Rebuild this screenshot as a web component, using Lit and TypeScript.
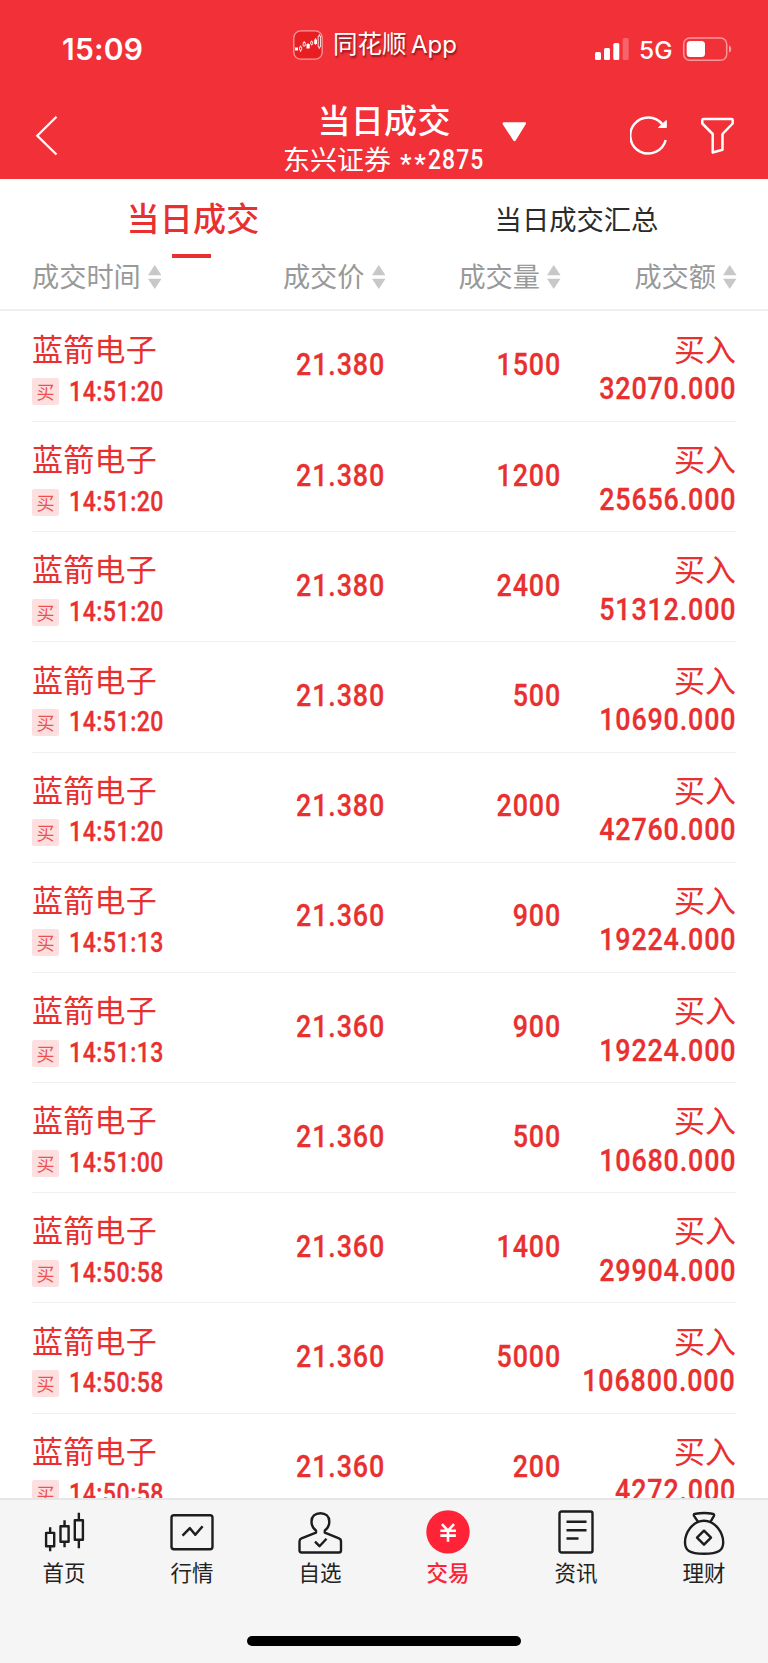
import { LitElement, html, css, svg } from "lit";
import { customElement, property } from "lit/decorators.js";

interface Trade {
  time: string;
  price: string;
  volume: string;
  amount: string;
}

const NAME = "蓝箭电子";
const TRADES: Trade[] = [
  { time: "14:51:20", price: "21.380", volume: "1500", amount: "32070.000" },
  { time: "14:51:20", price: "21.380", volume: "1200", amount: "25656.000" },
  { time: "14:51:20", price: "21.380", volume: "2400", amount: "51312.000" },
  { time: "14:51:20", price: "21.380", volume: "500", amount: "10690.000" },
  { time: "14:51:20", price: "21.380", volume: "2000", amount: "42760.000" },
  { time: "14:51:13", price: "21.360", volume: "900", amount: "19224.000" },
  { time: "14:51:13", price: "21.360", volume: "900", amount: "19224.000" },
  { time: "14:51:00", price: "21.360", volume: "500", amount: "10680.000" },
  { time: "14:50:58", price: "21.360", volume: "1400", amount: "29904.000" },
  { time: "14:50:58", price: "21.360", volume: "5000", amount: "106800.000" },
  { time: "14:50:58", price: "21.360", volume: "200", amount: "4272.000" },
];

const ICONS = {
  home: svg`<path d="M3.600 22.700h8.100V36H3.600zM7.650 17v5.700M7.650 36v5"/>
    <path d="M18 16h8.100v15.500H18zM22.050 10v6M22.050 31.500V37"/>
    <path d="M32.300 10h8.100v19.500h-8.100zM36.350 2.500V10M36.350 29.500V38"/>`,
  market: svg`<rect x="1" y="5" width="41" height="34" rx="2.500"/><path d="M12 25.500 19.400 18l5.400 6.500 7.300-8.500" stroke-width="2.500"/>`,
  watch: svg`<path d="M17.500 22.500v-2.300c-3-2-4.500-5-4.500-9 0-5 3.500-8.200 8.900-8.200s8.900 3.200 8.900 8.200c0 4-1.500 7-4.500 9v2.300l14.200 5.700c1.600.6 2 1.400 2 3V40c0 1.600-.7 2.300-2 2.300H3C1.700 42.300 1 41.600 1 40v-8.800c0-1.600.5-2.400 2-3z"/><path d="m16.500 31.500 4.500 4.500 7-7.500" />`,
  trade: svg`<circle class="disc" cx="21.500" cy="21.700" r="21.700"/><path class="yen" d="m15.500 14 6 6.500 6-6.500M13.800 20.500h15.600M13.800 25.400h15.600M21.500 20.500v11"/>`,
  news: svg`<rect x="5" y="1.300" width="33" height="41" rx="2"/><path d="M12 11.500h20M12 20h20M12 28.300h12" stroke-width="2.600"/>`,
  wealth: svg`<path d="m15.500 11.500-4-5.800c-.7-1.300.2-2 1.500-2.100 6-1 11.500-1 17 0 1.500.2 2 1 1.300 2.300l-3.200 5.600"/><path d="M21.500 10.500C10 10.500 2.500 23 2.500 32c0 8 4 11.500 19 11.500S40.700 40 40.700 32c0-9-7.700-21.500-19.200-21.500z"/><path d="m21.500 20.500 7 7-7 7-7-7z"/>`,
};

const TABS: { label: string; icon: unknown; active?: boolean }[] = [
  { label: "首页", icon: ICONS.home },
  { label: "行情", icon: ICONS.market },
  { label: "自选", icon: ICONS.watch },
  { label: "交易", icon: ICONS.trade, active: true },
  { label: "资讯", icon: ICONS.news },
  { label: "理财", icon: ICONS.wealth },
];

@customElement("trade-row")
class TradeRow extends LitElement {
  @property({ attribute: false }) trade!: Trade;

  static styles = css`
    :host {
      display: grid;
      grid-template-columns: 176px 177px 174.500px minmax(0, 1fr);
      margin: 0 32px;
      height: 110.200px;
      box-sizing: border-box;
      border-bottom: 1px solid #efefef;
      color: #e93030;
    }
    .name, .side { font-size: 31px; line-height: 36px; white-space: nowrap; margin-top: 18.200px; }
    .name { letter-spacing: .250px; }
    .side { text-align: right; }
    .when { display: flex; align-items: center; margin-top: 12.500px; height: 27px; }
    .tag {
      width: 27px; height: 27px; border-radius: 2px; background: #fedfe0;
      font-size: 18px; line-height: 26px; text-align: center; color: #ec5050;
    }
    .num {
      font-family: Roboto, "Liberation Sans", sans-serif;
      font-weight: 500; font-size: 32px; line-height: 36px; white-space: nowrap;
      letter-spacing: 1px; transform: scaleX(0.84); transform-origin: right;
      display: block; text-align: right; -webkit-text-stroke: .300px currentColor;
    }
    .mid { margin-top: 34.700px; }
    .vol { margin-right: -1.500px; }
    .last { display: flex; flex-direction: column; align-items: flex-end; }
    .amount { margin-top: 4.500px; }
    .time { font-size: 27.500px; line-height: 27px; transform-origin: left; margin: -1.500px 0 0 10px; letter-spacing: .600px; }
  `;

  render() {
    const t = this.trade;
    return html`
      <div>
        <div class="name">${NAME}</div>
        <div class="when"><span class="tag">买</span><span class="num time">${t.time}</span></div>
      </div>
      <span class="num mid">${t.price}</span>
      <span class="num mid vol">${t.volume}</span>
      <div class="last">
        <div class="side">买入</div>
        <span class="num amount">${t.amount}</span>
      </div>
    `;
  }
}

@customElement("app-root")
class AppRoot extends LitElement {
  static styles = css`
    :host {
      display: flex; flex-direction: column; width: 768px; height: 1663px; overflow: hidden;
      background: #fff; font-family: "Noto Sans CJK SC", sans-serif;
    }
    svg { display: block; fill: none; }
    .head { height: 179.300px; flex: none; background: #f23038; color: #fff; }
    .status { display: flex; height: 96px; box-sizing: border-box; align-items: flex-start; }
    .clock { font: 600 30px/36px Inter, sans-serif; width: 231px; margin: 31px 0 0 62px; letter-spacing: .200px; }
    .applogo { margin: 29.500px 10px 0 0; }
    .appname { font-size: 24.500px; line-height: 30px; margin-top: 28.200px; width: 262px; text-shadow: 1px 2px 2px rgba(60,0,0,.6); white-space: nowrap; }
    .latin { font-family: Inter, sans-serif; font-size: 24px; margin-left: 4.500px; }
    .signal { margin-top: 37px; }
    .net { font: 500 24.500px/30px Inter, sans-serif; margin: 34.700px 0 0 9px; width: 42.800px; white-space: nowrap; }
    .battery { margin-top: 36.700px; }
    .nav { display: flex; height: 83px; align-items: flex-start; }
    .back { margin: 20px 0 0 35px; width: 248px; }
    .title { width: 204px; white-space: nowrap; }
    .big { font-size: 33px; line-height: 38px; font-weight: 500; letter-spacing: .300px; margin: 4px 0 0 34.500px; }
    .account { font-size: 27px; line-height: 32px; font-weight: 400; margin-top: 5px; display: flex; }
    .stars { font: 500 26px/32px Roboto, sans-serif; letter-spacing: 2.700px; width: 27.500px; margin: 5px 0 0 9px; }
    .digits { font-family: Roboto, sans-serif; font-weight: 500; font-size: 27px; letter-spacing: 1.200px; transform: scaleX(.85); transform-origin: left; margin-top: .700px; }
    .caret { margin: 26px 0 0 14.500px; }
    .refresh { margin: 20px 0 0 103px; }
    .filter { margin: 21px 0 0 33px; }
    .tabs { display: grid; grid-template-columns: 1fr 1fr; height: 79px; flex: none; }
    .tab { display: flex; flex-direction: column; align-items: center; color: #2b2b2b; font-size: 27.300px; line-height: 32px; padding-top: 23px; }
    .tab:last-child { padding-left: 1px; }
    .tab.on { color: #e93030; font-size: 33px; line-height: 38px; font-weight: 500; padding-top: 19px; letter-spacing: .300px; }
    .tab.on span:first-child { padding-left: 2px; }
    .bar { width: 39.500px; height: 4px; background: #e93030; margin: 18px 1px 0 0; }
    .cols { display: grid; grid-template-columns: 176.500px 176.500px 175.500px 1fr; height: 52.700px; flex: none; padding: 0 31.500px 0 32px; box-sizing: border-box; border-bottom: 2px solid #efefef; color: #999; font-size: 27.200px; line-height: 32px; }
    .col { display: flex; justify-content: flex-end; gap: 7px; padding-top: 1px; white-space: nowrap; }
    .col:first-child { justify-content: flex-start; }
    .col svg { margin-top: 5.500px; flex: none; }
    .rows { flex: none; height: 1187.500px; overflow: hidden; padding-top: .800px; box-sizing: border-box; }
    .foot { flex: 1; background: #f5f5f5; border-top: 2px solid #e6e6e6; display: flex; flex-direction: column; align-items: center; }
    .items { display: grid; grid-template-columns: repeat(6, 128px); height: 136px; }
    .item { display: flex; flex-direction: column; align-items: center; padding-top: 10px; color: #222; font-size: 21.500px; line-height: 26px; }
    .item svg { stroke: #1d1d1d; stroke-width: 2.400; stroke-linejoin: round; overflow: visible; }
    .item.on { color: #ff2337; font-weight: 500; }
    .item .disc { fill: #ff2337; stroke: none; }
    .item .yen { stroke: #fff; stroke-width: 2.600; }
    .cap { margin-top: 5px; }
    .pill { width: 273.500px; height: 10px; border-radius: 5px; background: #000; }
  `;

  private column(label: string) {
    return html`<div class="col"><span>${label}</span>
      <svg width="13.500" height="24" viewBox="0 0 13 24" preserveAspectRatio="none"><path fill="#c8c8c8" d="M6.500 0 13 10.300H0zM0 13.700h13L6.500 24z"/></svg></div>`;
  }

  render() {
    return html`
      <header class="head">
        <div class="status">
          <div class="clock">15:09</div>
          <svg class="applogo" width="30" height="30" viewBox="0 0 30 30">
            <rect x=".8" y=".8" width="28.400" height="28.400" rx="7" fill="#e81f22" stroke="#f99a9c" stroke-width="1.300"/>
            <path fill="#fff" d="M2 17.500h3v3H2zM13.500 14h3.200v4.500h-3.200zM21.200 9.500h2.800v4.500h-2.800z"/>
            <path stroke="#fff" stroke-width=".8" d="M6.500 17h2.200v3H6.500zM7.600 15.500V17M7.600 20v2M10.200 12.500h2v3.500h-2zM11.200 11v1.500M17.700 11.700h2v2.500h-2zM18.700 10.500v1.200M18.700 14.200v1.300M25.200 6h2.300v11h-2.300zM26.300 4v2M26.300 17v2M22.600 8v7M15 13v1"/>
          </svg>
          <div class="appname">同花顺<span class="latin">App</span></div>
          <svg class="signal" width="35" height="24" viewBox="0 0 35 24">
            <g fill="#fff"><rect x="0" y="15" width="6" height="8" rx="1.500"/><rect x="9" y="11" width="6" height="12" rx="1.500"/><rect x="18.300" y="6" width="6" height="17" rx="1.500"/><rect x="27.700" y="1" width="6" height="22" rx="1.500" opacity=".25"/></g>
          </svg>
          <div class="net">5G</div>
          <svg class="battery" width="51" height="25" viewBox="0 0 51 25">
            <rect x="1.700" y=".9" width="43" height="22.400" rx="6" stroke="#fff" stroke-opacity=".5" stroke-width="1.500"/>
            <rect x="4.700" y="4" width="18.300" height="16" rx="3.500" fill="#fff"/>
            <path d="M47 8.500c3 1 3 6 0 7z" fill="#fff" opacity=".55"/>
          </svg>
        </div>
        <div class="nav">
          <svg class="back" width="24" height="40" viewBox="0 0 24 40" preserveAspectRatio="xMinYMin"><path d="M21.500.8 2.300 19.800 21.500 38.500" stroke="#fff" stroke-width="2.300"/></svg>
          <div class="title">
            <div class="big">当日成交</div>
            <div class="account"><span>东兴证券</span><span class="stars">**</span><span class="digits">2875</span></div>
          </div>
          <svg class="caret" width="25" height="20" viewBox="0 0 25 20"><path fill="#fff" d="M2 .3h21q1.800.2.700 1.900L13.700 18.500q-1.200 1.600-2.400 0L.7 2.200Q0 .5 2 .3z"/></svg>
          <svg class="refresh" width="38" height="40" viewBox="0 0 38 40"><path d="M35.700 24A18 18 0 1 1 32.500 8.500" stroke="#fff" stroke-width="2.500"/><path d="M36.300 4.500V11.500H28.500z" fill="#fff" stroke="#fff"/></svg>
          <svg class="filter" width="33" height="38" viewBox="0 0 33 38"><path d="M2.500 2h28q1.200 0 1.200 1.200V6.500L21.500 17v15.700L11.700 35.500V17L1.300 6.500V3.200Q1.300 2 2.500 2z" stroke="#fff" stroke-width="2.500" stroke-linejoin="round"/></svg>
        </div>
      </header>
      <div class="tabs">
        <div class="tab on"><span>当日成交</span><span class="bar"></span></div>
        <div class="tab">当日成交汇总</div>
      </div>
      <div class="cols">${["成交时间", "成交价", "成交量", "成交额"].map((l) => this.column(l))}</div>
      <main class="rows">${TRADES.map((t) => html`<trade-row .trade=${t}></trade-row>`)}</main>
      <footer class="foot">
        <nav class="items">
          ${TABS.map((t) => html`<div class="item ${t.active ? "on" : ""}">
            <svg width="44" height="44" viewBox="-.5 -.2 44 44">${t.icon}</svg><span class="cap">${t.label}</span></div>`)}
        </nav>
        <div class="pill"></div>
      </footer>
    `;
  }
}
